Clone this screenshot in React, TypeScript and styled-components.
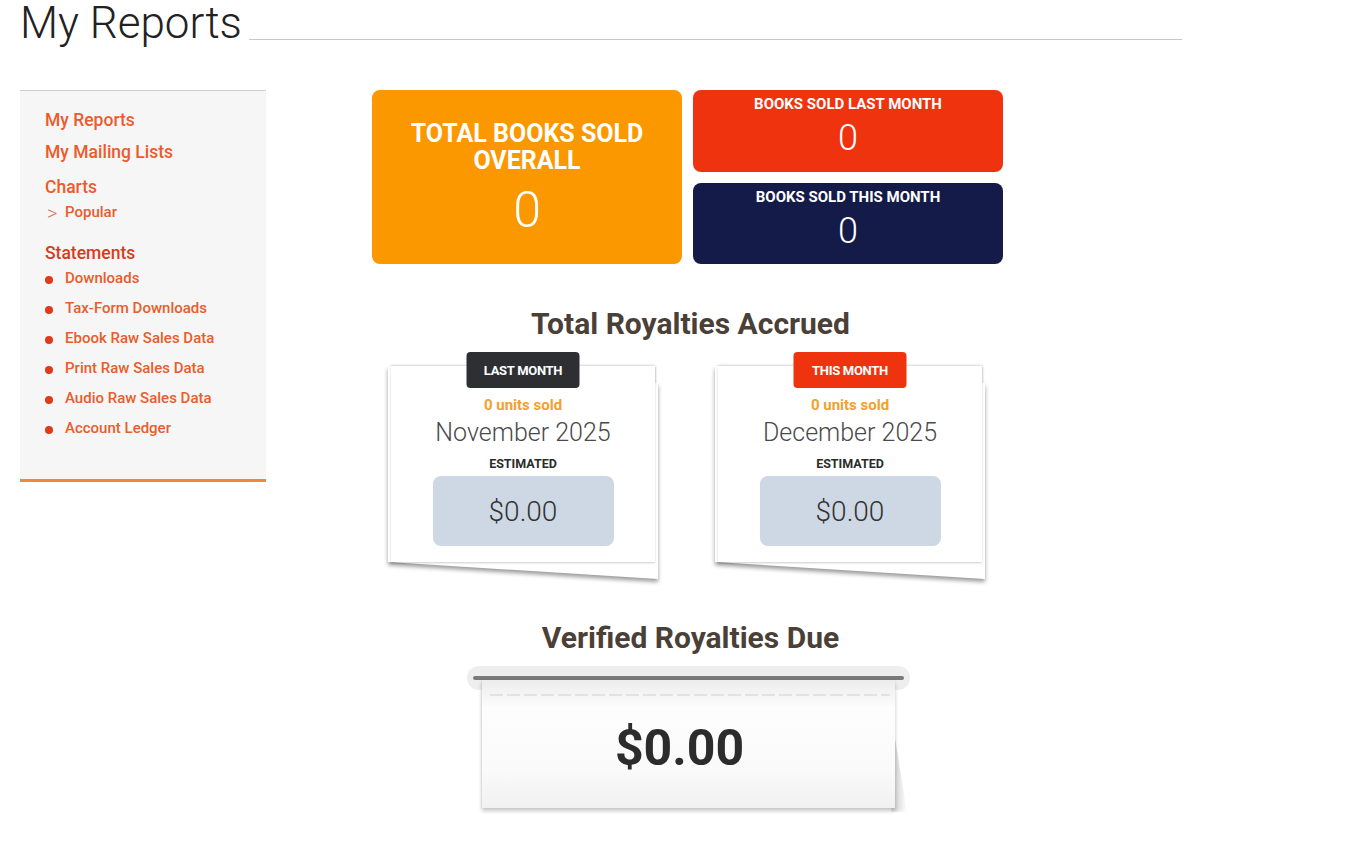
import React from 'react';
import styled, { createGlobalStyle } from 'styled-components';


const GlobalStyle = createGlobalStyle`
  body {
    margin: 0;
    background: #fff;
    font-family: Roboto, 'Liberation Sans', sans-serif;
    color: #333;
  }
`;

const Page = styled.div`
  width: 1359px;
  min-height: 842px;
  padding-left: 20px;
  box-sizing: border-box;
`;


//Header ----------------------------------------
const Header = styled.header`
  width: 1162px;
  height: 46px;
  display: flex;
`;

const Title = styled.h1`
  margin: 0;
  font-size: 44px;
  line-height: 46px;
  font-weight: 300;
  color: #222;
  white-space: nowrap;
`;

const TitleRule = styled.div`
  flex: 1;
  align-self: flex-end;
  margin: 0 0 6px 7px;
  border-top: 1px solid #c8c8c8;
`;
//-----------------------------------------------


const Body = styled.div`
  display: flex;
  align-items: flex-start;
  margin-top: 44px;
`;


//Sidebar ---------------------------------------
const Sidebar = styled.nav`
  width: 246px;
  padding: 17px 0 36px 25px;
  box-sizing: border-box;
  background: #f6f6f6;
  border-top: 1px solid #cfcfcf;
  border-bottom: 3px solid #ec8a3a;
`;

const NavLink = styled.div<{ $top?: number; $dark?: boolean; $lh?: number }>`
  margin-top: ${p => p.$top ?? 0}px;
  font-size: 17.5px;
  line-height: ${p => p.$lh ?? 24}px;
  font-weight: 500;
  color: ${p => (p.$dark ? '#d63c1c' : '#ec5b2c')};
  cursor: pointer;
`;

const SubLink = styled.div<{ $lh?: number }>`
  display: flex;
  align-items: center;
  font-size: 15px;
  line-height: ${p => p.$lh ?? 30}px;
  font-weight: 500;
  color: #e85d2b;
  cursor: pointer;
`;

const Bullet = styled.span`
  width: 8px;
  height: 8px;
  margin: 3px 12px 0 0;
  border-radius: 50%;
  background: #e03a1a;
  flex-shrink: 0;
`;

const Chevron = styled.span`
  width: 20px;
  margin-top: 3px;
  padding-left: 2px;
  box-sizing: border-box;
  font-size: 20px;
  font-weight: 300;
  color: #e0765c;
`;
//-----------------------------------------------


//Main column -----------------------------------
const Main = styled.main`
  width: 631px;
  margin-left: 106px;
  display: flex;
  flex-direction: column;
  align-items: center;
`;

const StatsRow = styled.div`
  width: 100%;
  display: flex;
  gap: 11px;
`;

const StatStack = styled.div`
  flex: 1;
  display: flex;
  flex-direction: column;
  gap: 11px;
`;

const StatCard = styled.div<{ $bg: string; $big?: boolean }>`
  flex: 1;
  height: ${p => (p.$big ? '174px' : 'auto')};
  display: flex;
  flex-direction: column;
  align-items: center;
  padding-top: ${p => (p.$big ? '30px' : '6px')};
  box-sizing: border-box;
  border-radius: 8px;
  background: ${p => p.$bg};
  color: #fff;
`;

const StatLabel = styled.div<{ $big?: boolean }>`
  font-size: ${p => (p.$big ? '25px' : '15px')};
  line-height: ${p => (p.$big ? '27px' : '16px')};
  font-weight: 700;
  text-transform: uppercase;
  text-align: center;
`;

const StatValue = styled.div<{ $big?: boolean }>`
  font-size: ${p => (p.$big ? '50px' : '36px')};
  line-height: ${p => (p.$big ? '64px' : '40px')};
  font-weight: 300;
  margin-top: ${p => (p.$big ? '4px' : '6px')};
`;

const SectionTitle = styled.h2<{ $top: number }>`
  margin: ${p => p.$top}px 0 0;
  padding-left: 6px;
  font-size: 30px;
  line-height: 36px;
  font-weight: 700;
  color: #4b4037;
  text-align: center;
`;
//-----------------------------------------------


//Royalty cards ---------------------------------
const RoyaltyRow = styled.div`
  display: flex;
  gap: 63px;
  margin-top: 24px;
  padding-right: 2px;
`;

const RoyaltyCard = styled.div`
  position: relative;
  width: 264px;
  padding: 29px 0 16px;
  box-sizing: border-box;
  display: flex;
  flex-direction: column;
  align-items: center;
  background: #fff;
  box-shadow: 0 0 3px rgba(0, 0, 0, 0.28);
  z-index: 0;
  /* second sheet peeking out under the card */
  &::before {
    content: '';
    position: absolute;
    inset: 0 -3px 0 -3px;
    background: #fff;
    transform: skewY(3.6deg);
    transform-origin: left bottom;
    box-shadow: 0 3px 4px rgba(0, 0, 0, 0.4);
    z-index: -2;
  }
  &::after {
    content: '';
    position: absolute;
    inset: 0;
    background: #fff;
    box-shadow: 0 1px 2px rgba(0, 0, 0, 0.2);
    z-index: -1;
  }
`;

const MonthTag = styled.div<{ $bg: string }>`
  position: absolute;
  top: -14px;
  left: 50%;
  transform: translateX(-50%);
  width: 113px;
  height: 36px;
  display: flex;
  align-items: center;
  justify-content: center;
  border-radius: 4px;
  background: ${p => p.$bg};
  color: #fff;
  font-size: 13px;
  font-weight: 700;
  letter-spacing: -0.3px;
`;

const Units = styled.div`
  font-size: 15px;
  line-height: 20px;
  font-weight: 700;
  color: #f2a02e;
`;

const Month = styled.div`
  font-size: 25px;
  line-height: 36px;
  font-weight: 300;
  color: #4a4a4a;
`;

const Estimated = styled.div`
  margin-top: 4px;
  font-size: 12.5px;
  line-height: 18px;
  font-weight: 700;
  color: #2b2b2b;
`;

const PriceBox = styled.div`
  width: 181px;
  height: 70px;
  margin-top: 3px;
  display: flex;
  align-items: center;
  justify-content: center;
  border-radius: 8px;
  background: #cdd8e4;
  font-size: 28px;
  font-weight: 300;
  color: #333;
`;
//-----------------------------------------------


//Verified receipt ------------------------------
const Receipt = styled.div`
  position: relative;
  width: 443px;
  margin: 10px 0 0 2px;
  /* curl shadow behind the paper's lower right edge */
  &::after {
    content: '';
    position: absolute;
    left: 424px;
    top: 72px;
    width: 16px;
    height: 74px;
    background: linear-gradient(90deg, rgba(0, 0, 0, 0.22), rgba(0, 0, 0, 0));
    clip-path: polygon(0 0, 25% 0, 100% 100%, 0 100%);
    filter: blur(2px);
    z-index: 0;
  }
`;

const Tray = styled.div`
  height: 24px;
  padding: 10px 6px 0;
  box-sizing: border-box;
  border-radius: 12px;
  background: #eeeeee;
`;

const Slot = styled.div`
  height: 4px;
  border-radius: 2px;
  background: #7a7a7a;
`;

const Paper = styled.div`
  position: relative;
  width: 413px;
  height: 128px;
  margin: -10px 0 0 15px;
  padding-top: 14px;
  box-sizing: border-box;
  background: linear-gradient(#ececec 0px, #fdfdfd 28px, #fafafa 70%, #f1f1f1 100%);
  box-shadow: 0 3px 4px rgba(0, 0, 0, 0.22), -1px 0 2px rgba(0, 0, 0, 0.06);
  z-index: 1;
`;

const Perforation = styled.div`
  height: 1.5px;
  margin: 0 5px 0 8px;
  background: repeating-linear-gradient(90deg, #e2e2e2 0 13px, transparent 13px 17px);
`;

const DueAmount = styled.div`
  margin-top: 22px;
  padding-right: 18px;
  text-align: center;
  font-size: 50px;
  line-height: 60px;
  font-weight: 700;
  color: #2c2c2c;
`;
//-----------------------------------------------


const statements = [
  'Downloads',
  'Tax-Form Downloads',
  'Ebook Raw Sales Data',
  'Print Raw Sales Data',
  'Audio Raw Sales Data',
  'Account Ledger',
];

const App = (): JSX.Element => {
  return (
    <Page>
      <GlobalStyle />
      <Header>
        <Title>My Reports</Title>
        <TitleRule />
      </Header>

      <Body>
        <Sidebar>
          <NavLink>My Reports</NavLink>
          <NavLink $top={8}>My Mailing Lists</NavLink>
          <NavLink $top={11}>Charts</NavLink>
          <SubLink $lh={22}>
            <Chevron>&gt;</Chevron>Popular
          </SubLink>
          <NavLink $top={19} $lh={20} $dark>Statements</NavLink>
          {statements.map(s => (
            <SubLink key={s}>
              <Bullet />
              {s}
            </SubLink>
          ))}
        </Sidebar>

        <Main>
          <StatsRow>
            <StatCard $bg="#fb9800" $big>
              <StatLabel $big>Total Books Sold<br />Overall</StatLabel>
              <StatValue $big>0</StatValue>
            </StatCard>
            <StatStack>
              <StatCard $bg="#ef330f">
                <StatLabel>Books Sold Last Month</StatLabel>
                <StatValue>0</StatValue>
              </StatCard>
              <StatCard $bg="#141b48">
                <StatLabel>Books Sold This Month</StatLabel>
                <StatValue>0</StatValue>
              </StatCard>
            </StatStack>
          </StatsRow>

          <SectionTitle $top={42}>Total Royalties Accrued</SectionTitle>
          <RoyaltyRow>
            <RoyaltyCard>
              <MonthTag $bg="#2d2f33">LAST MONTH</MonthTag>
              <Units>0 units sold</Units>
              <Month>November 2025</Month>
              <Estimated>ESTIMATED</Estimated>
              <PriceBox>$0.00</PriceBox>
            </RoyaltyCard>
            <RoyaltyCard>
              <MonthTag $bg="#ef330f">THIS MONTH</MonthTag>
              <Units>0 units sold</Units>
              <Month>December 2025</Month>
              <Estimated>ESTIMATED</Estimated>
              <PriceBox>$0.00</PriceBox>
            </RoyaltyCard>
          </RoyaltyRow>

          <SectionTitle $top={58}>Verified Royalties Due</SectionTitle>
          <Receipt>
            <Tray>
              <Slot />
            </Tray>
            <Paper>
              <Perforation />
              <DueAmount>$0.00</DueAmount>
            </Paper>
          </Receipt>
        </Main>
      </Body>
    </Page>
  );
};


export default App;
